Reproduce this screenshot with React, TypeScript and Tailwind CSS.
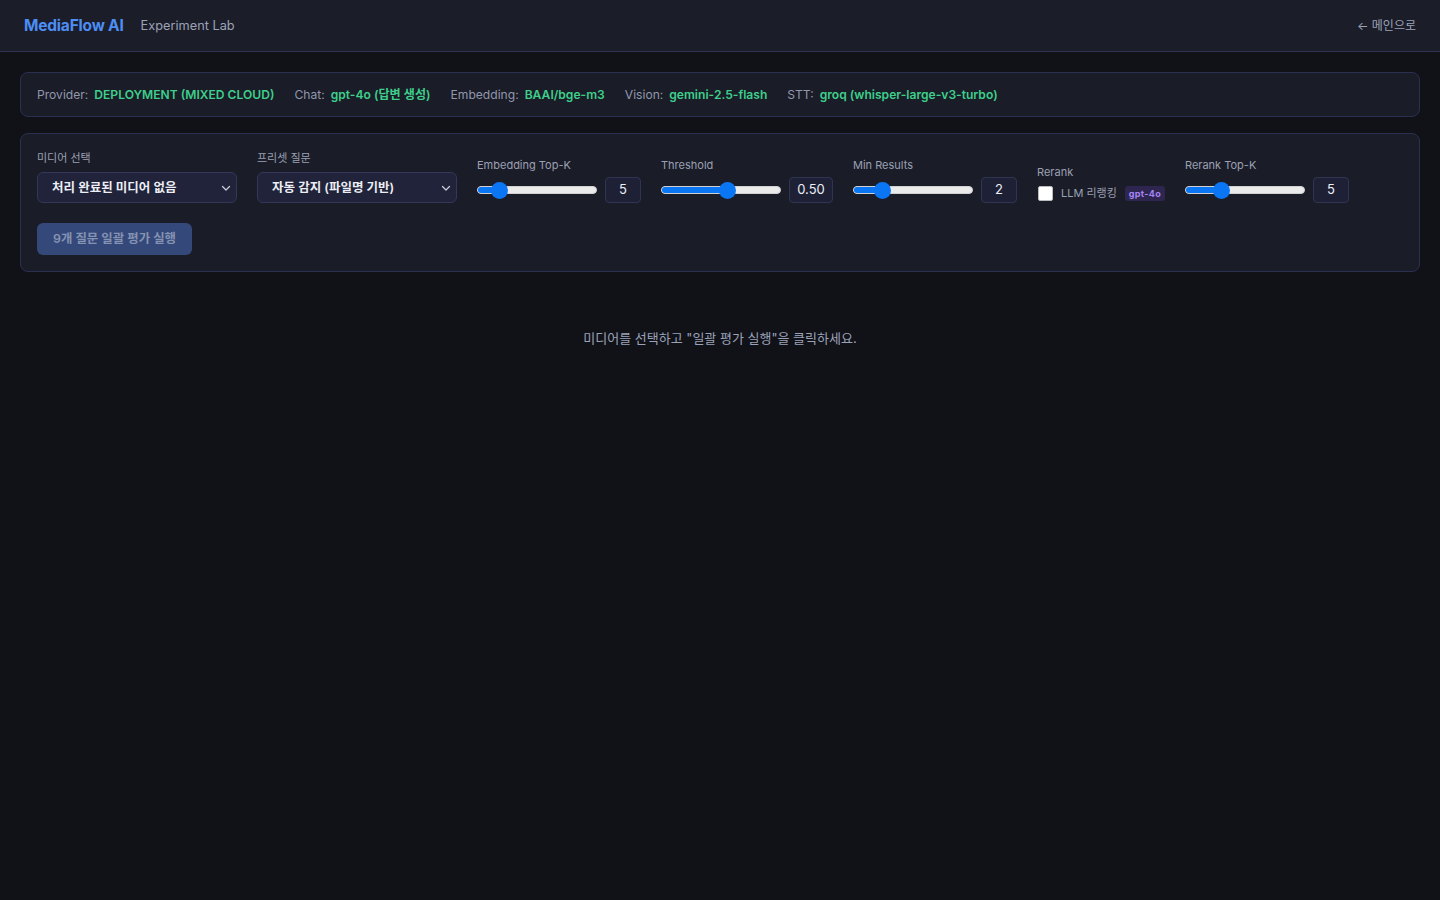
import React from "react";

const font = { fontFamily: 'Inter, "Noto Sans CJK KR", "Noto Sans", sans-serif' };

function Chevron() {
  return (
    <svg width="10" height="10" viewBox="0 0 10 10" fill="none" stroke="#c8ccd8" strokeWidth="1.3" strokeLinecap="round" strokeLinejoin="round">
      <path d="M1.5 3.5 5 7l3.5-3.5" />
    </svg>
  );
}

function Select({ label, value }: { label: string; value: string }) {
  return (
    <div className="flex flex-col">
      <div className="text-[11px] text-[#9aa0b4] mb-1.5 leading-4">{label}</div>
      <div className="w-[200px] h-[31px] rounded-md border border-[#33385a] bg-[#20233a] flex items-center justify-between pl-[14px] pr-[5px]">
        <span className="text-[12.5px] font-semibold text-[#eceef4] pt-[1px]">{value}</span>
        <Chevron />
      </div>
    </div>
  );
}

function Slider({ label, pos, value, boxW }: { label: string; pos: number; value: string; boxW: string }) {
  return (
    <div className="flex flex-col">
      <div className="text-[11px] text-[#9aa0b4] mb-1 leading-4">{label}</div>
      <div className="flex items-center gap-2">
        <div className="relative w-[120px] h-[26px] flex items-center">
          <div className="w-full h-[8px] rounded-full bg-[#ebebeb] border border-[#d0d0d0] overflow-hidden">
            <div className="h-full bg-[#0b76f4]" style={{ width: pos }} />
          </div>
          <div
            className="absolute w-[17px] h-[17px] rounded-full bg-[#0b76f4]"
            style={{ left: pos - 8.5, top: 4.5 }}
          />
        </div>
        <div className={`${boxW} h-[26px] rounded border border-[#2f3452] bg-[#1e2135] flex items-center justify-center text-[13px] text-[#eceef4]`}>
          {value}
        </div>
      </div>
    </div>
  );
}

export default function App() {
  return (
    <div className="min-h-screen bg-[#111218]" style={font}>
      <header className="h-[52px] bg-[#1b1d29] border-b border-[#2f3350] flex items-center justify-between px-6">
        <div className="flex items-center">
          <span className="text-[15.5px] font-bold text-[#4c8ef5] tracking-[-0.2px]">MediaFlow AI</span>
          <span className="ml-[17px] text-[12.75px] text-[#9ba2b8]">Experiment Lab</span>
        </div>
        <span className="text-[12px] text-[#9ba2b8]">← 메인으로</span>
      </header>

      <main className="px-5 pt-5 flex flex-col gap-4">
        <div className="h-[45px] rounded-lg border border-[#2c3050] bg-[#1a1c27] px-4 flex items-center gap-5 text-[12.1px] leading-5">
          {[
            ["Provider:", "DEPLOYMENT (MIXED CLOUD)"],
            ["Chat:", "gpt-4o (답변 생성)"],
            ["Embedding:", "BAAI/bge-m3"],
            ["Vision:", "gemini-2.5-flash"],
            ["STT:", "groq (whisper-large-v3-turbo)"],
          ].map(([k, v]) => (
            <div key={k} className="flex items-center gap-1.5">
              <span className="text-[#9197ad]">{k}</span>
              <span className="font-semibold text-[#3dcf8b]">{v}</span>
            </div>
          ))}
        </div>

        <div className="rounded-lg border border-[#2c3050] bg-[#1a1c27] p-4 flex flex-col gap-5">
          <div className="flex items-end gap-5">
            <Select label="미디어 선택" value="처리 완료된 미디어 없음" />
            <Select label="프리셋 질문" value="자동 감지 (파일명 기반)" />
            <Slider label="Embedding Top-K" pos={22} value="5" boxW="w-[36px]" />
            <Slider label="Threshold" pos={66} value="0.50" boxW="w-[44px]" />
            <Slider label="Min Results" pos={29} value="2" boxW="w-[36px]" />
            <div className="flex flex-col">
              <div className="text-[11px] text-[#9aa0b4] mb-1 leading-4">Rerank</div>
              <div className="flex items-center h-[19px]">
                <div className="w-[15px] h-[15px] ml-[1px] rounded-[2px] bg-white border border-[#bbb]" />
                <span className="ml-2 text-[11px] text-[#9aa0b4]">LLM 리랭킹</span>
                <span className="ml-2 px-[4px] h-[15px] leading-[15px] rounded-[3px] bg-[#2e2650] text-[9px] font-bold text-[#a585f5] tracking-[0.3px]">gpt-4o</span>
              </div>
            </div>
            <Slider label="Rerank Top-K" pos={37} value="5" boxW="w-[36px]" />
          </div>
          <div>
            <button className="h-8 px-4 rounded-md bg-[#34497a] text-[12.4px] font-semibold text-[#8592b2]">
              9개 질문 일괄 평가 실행
            </button>
          </div>
        </div>

        <div className="pt-10 text-center text-[13px] leading-5 text-[#9ba2b8]">
          미디어를 선택하고 "일괄 평가 실행"을 클릭하세요.
        </div>
      </main>
    </div>
  );
}
